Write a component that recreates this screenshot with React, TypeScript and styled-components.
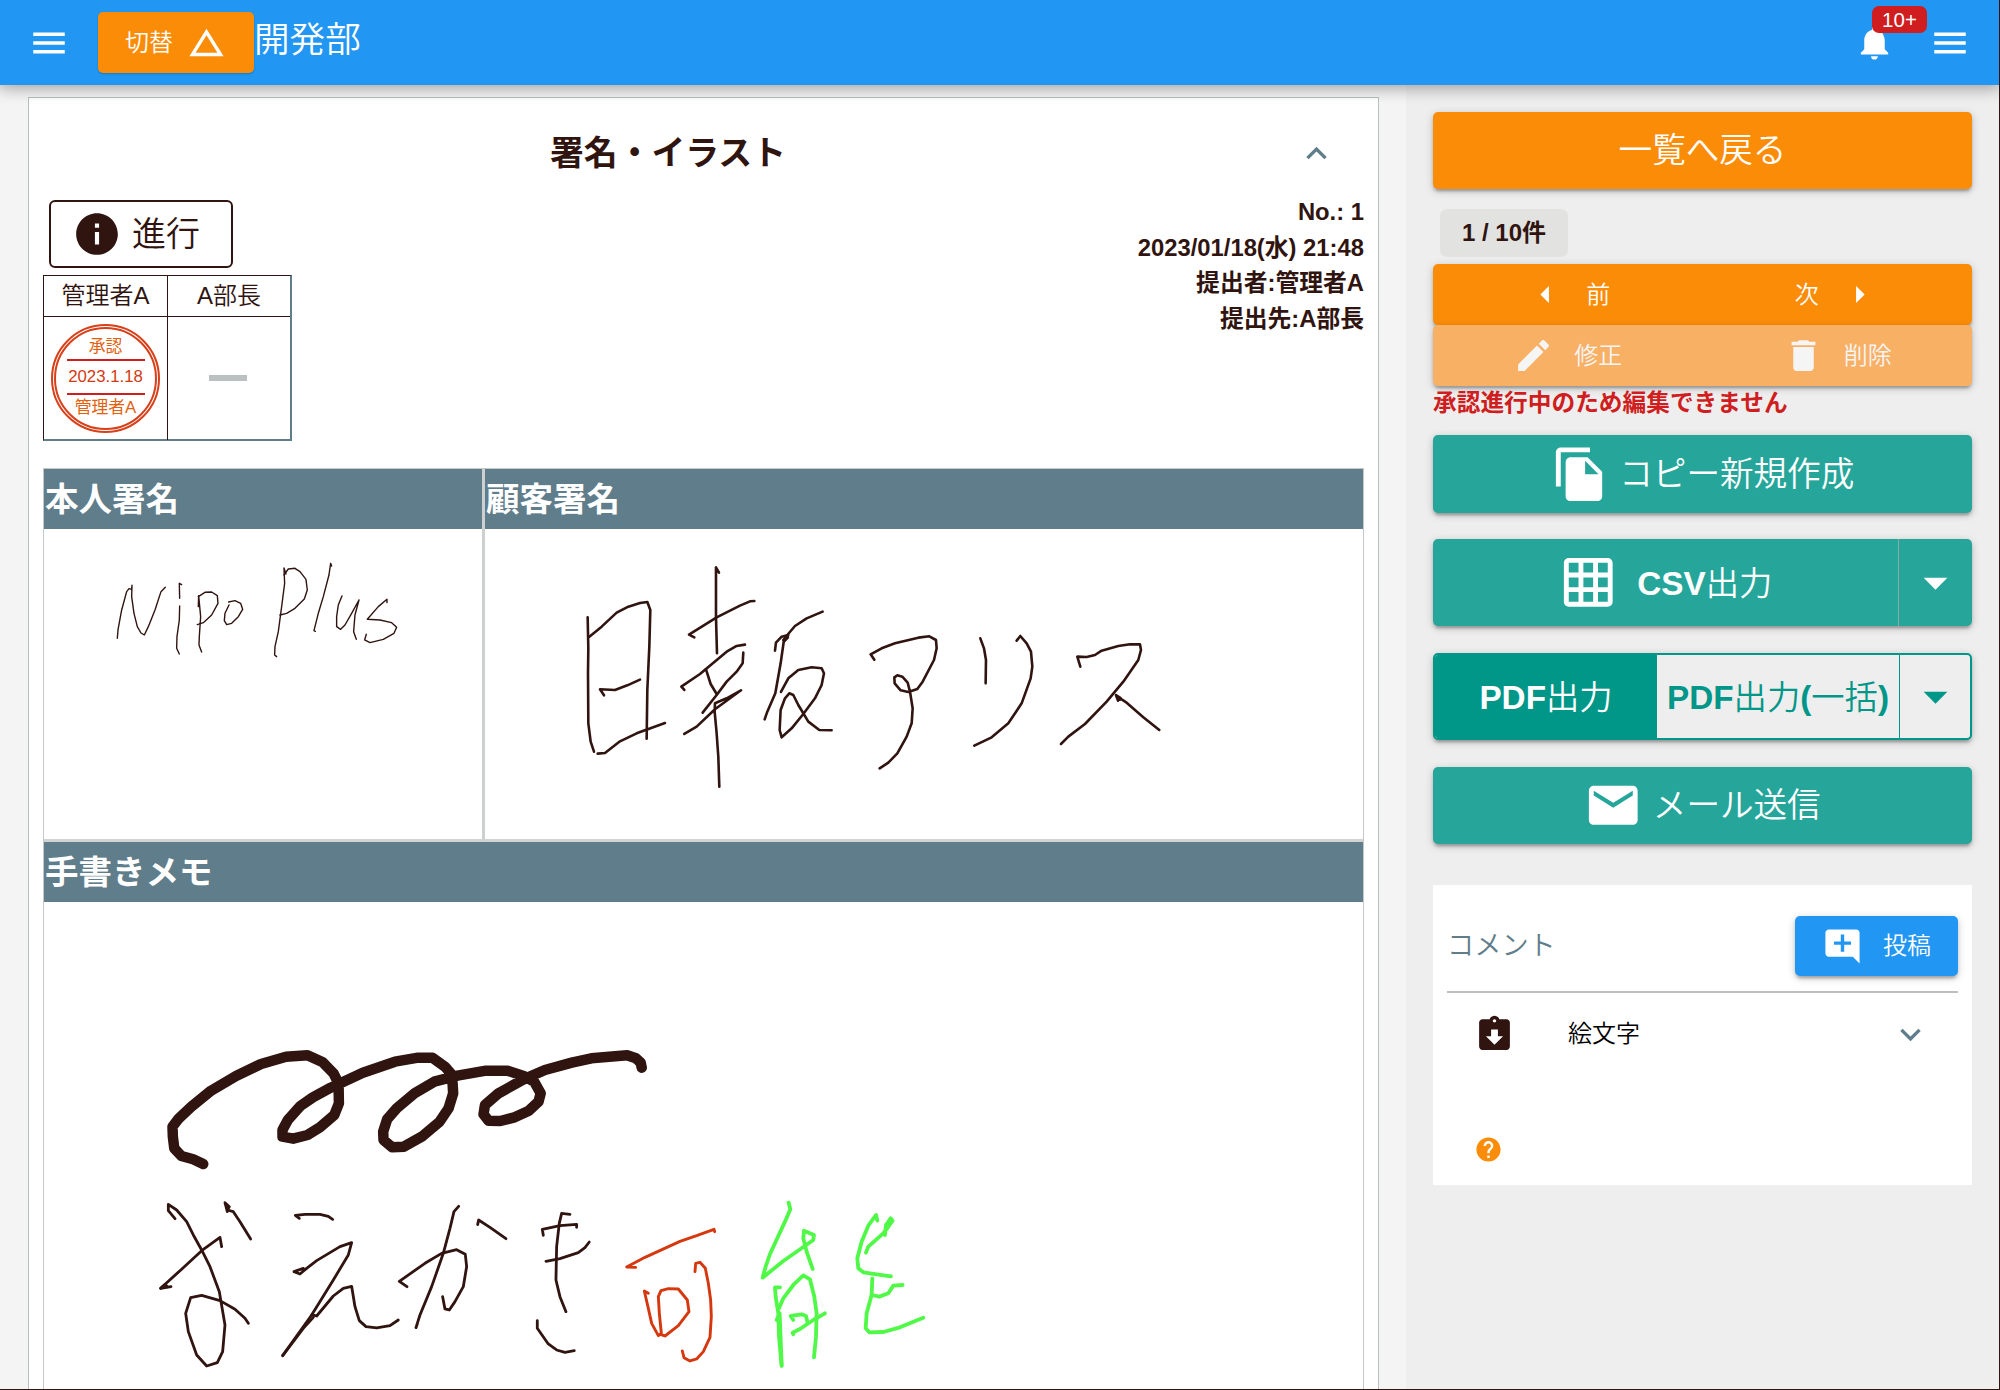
import React from "react";
import styled, { createGlobalStyle, css } from "styled-components";
import {
  MdMenu,
  MdChangeHistory,
  MdNotifications,
  MdExpandLess,
  MdExpandMore,
  MdInfo,
  MdArrowLeft,
  MdArrowRight,
  MdEdit,
  MdDelete,
  MdFileCopy,
  MdGridOn,
  MdArrowDropDown,
  MdEmail,
  MdAddComment,
  MdAssignmentReturned,
  MdHelp,
} from "react-icons/md";

const ink = "#301410";
const slate = "#607d8b";
const orange = "#fb8c08";
const teal = "#26a69a";
const deepTeal = "#009688";
const blue = "#2196f3";
const red = "#cf1d20";

const raised = css`
  box-shadow: 0 2px 8px rgba(0, 0, 0, 0.2), 0 3px 3px rgba(0, 0, 0, 0.14),
    0 5px 2px -3px rgba(0, 0, 0, 0.12);
`;

const GlobalStyle = createGlobalStyle`
  *, *::before, *::after { box-sizing: border-box; }
  body { margin: 0; }
  button { font: inherit; color: inherit; border: 0; margin: 0; padding: 0; background: none; }
  svg { display: block; flex: none; }
`;

const Page = styled.div`
  width: 2000px;
  height: 1390px;
  overflow: hidden;
  display: flex;
  flex-direction: column;
  background: #f4f4f4;
  border-right: 1px solid ${ink};
  border-bottom: 1px solid ${ink};
  color: ${ink};
  font-family: "Liberation Sans", "Noto Sans CJK JP", sans-serif;
  font-size: 24px;
  font-weight: 350;
  line-height: 1.5;
`;

const Header = styled.header`
  position: relative;
  z-index: 2;
  flex: none;
  height: 85px;
  display: flex;
  align-items: center;
  padding: 0 28px 0 28px;
  background: ${blue};
  color: #fff;
  box-shadow: 0 0 16px 3px rgba(0, 0, 0, 0.2), 0 0 16px rgba(0, 0, 0, 0.24);
`;

const SwitchButton = styled.button`
  width: 156px;
  height: 61px;
  margin-left: 28px;
  display: flex;
  align-items: center;
  justify-content: center;
  gap: 13px;
  border-radius: 5px;
  background: ${orange};
  box-shadow: 0 1px 2px rgba(0, 0, 0, 0.2);
`;

const Department = styled.h1`
  margin: 0 auto 6px 0;
  font-size: 35.6px;
  font-weight: 350;
  line-height: 48px;
`;

const Bell = styled.div`
  position: relative;
  margin-right: 34px;
`;

const Badge = styled.span`
  position: absolute;
  left: 18px;
  top: -16px;
  width: 55px;
  height: 27px;
  border-radius: 7px;
  background: ${red};
  font-size: 20.5px;
  line-height: 28px;
  text-align: center;
`;

const Columns = styled.div`
  flex: 1;
  min-height: 0;
  display: flex;
`;

const Main = styled.main`
  width: 1406px;
  padding: 12px 27px 0 28px;
  overflow: hidden;
`;

const Sheet = styled.article`
  height: 1300px;
  padding: 14px 14px 0 14px;
  background: #fff;
  border: 1px solid #b9bebe;
`;

const SheetHead = styled.div`
  height: 81px;
  display: flex;
  align-items: center;
  padding: 1px 27px 0 0;
  gap: 3px;
  color: ${slate};
`;

const SheetTitle = styled.h2`
  flex: 1;
  margin: 0;
  text-align: center;
  font-size: 33.8px;
  font-weight: 700;
  line-height: 48px;
  color: ${ink};
`;

const Summary = styled.div`
  height: 275px;
  display: flex;
  justify-content: space-between;
  align-items: flex-start;
`;

const StatusButton = styled.button`
  margin: 7px 0 7px 6px;
  width: 184px;
  height: 68px;
  display: flex;
  align-items: center;
  gap: 10px;
  padding: 0 0 1px 21px;
  border: 2px solid ${ink};
  border-radius: 6px;
  font-size: 34px;
`;

const Approvals = styled.div`
  width: 249px;
  height: 166px;
  display: grid;
  grid-template-columns: 124px 122px;
  grid-template-rows: 41px 123px;
  border: 1px solid ${ink};
  border-right: 2px solid ${slate};
  border-bottom: 2px solid ${slate};
`;

const ApprovalCell = styled.div<{ $head?: boolean; $last?: boolean }>`
  display: flex;
  align-items: center;
  justify-content: center;
  border-right: ${(p) => (p.$last ? "0" : `1px solid ${ink}`)};
  border-bottom: ${(p) => (p.$head ? `1px solid ${ink}` : "0")};
  line-height: 36px;
`;

const Stamp = styled.div`
  width: 109px;
  height: 109px;
  margin-bottom: 1px;
  border: 5px double #d8401a;
  border-radius: 50%;
  display: flex;
  flex-direction: column;
  align-items: center;
  padding-top: 5px;
  font-size: 16.8px;
  font-weight: 400;
  color: #e2600e;
`;

const StampLine = styled.span`
  line-height: 25px;
  white-space: nowrap;
`;

const StampDate = styled.span`
  width: 78px;
  height: 36px;
  border-top: 2px solid ${red};
  border-bottom: 2px solid ${red};
  color: #d23a14;
  line-height: 32px;
  text-align: center;
`;

const Pending = styled.div`
  width: 38px;
  height: 6px;
  margin: 0 2px 2px 0;
  background: #bac1c0;
`;

const Meta = styled.div`
  padding-top: 1px;
  font-size: 23.8px;
  font-weight: 700;
  line-height: 35.6px;
  text-align: right;
`;

const Fields = styled.div`
  border: 1px solid #c4c8c8;
  display: grid;
  grid-template-columns: 441px 1fr;
`;

const Field = styled.section<{ $wide?: boolean; $divided?: boolean }>`
  grid-column: ${(p) => (p.$wide ? "1 / -1" : "auto")};
  border-right: ${(p) => (p.$divided ? "3px solid #ced0d0" : "0")};
  border-bottom: 3px solid #d2d3d3;
`;

const FieldLabel = styled.h3`
  margin: 0;
  height: 60px;
  padding: 1px 0 0 1px;
  background: ${slate};
  color: #fff;
  font-size: 33.5px;
  font-weight: 600;
  line-height: 60px;
`;

const Drawer = styled.aside`
  flex: 1;
  padding: 27px;
  background: #eee;
`;

const Action = styled.button<{ $tone?: string; $h: number; $gap?: number; $mt?: number }>`
  width: 100%;
  height: ${(p) => p.$h}px;
  margin-top: ${(p) => p.$mt ?? 0}px;
  display: flex;
  align-items: center;
  justify-content: center;
  gap: ${(p) => p.$gap ?? 10}px;
  border-radius: 5px;
  background: ${(p) => p.$tone ?? teal};
  color: #fff;
  font-size: 33.6px;
  ${raised}
`;

const ActionText = styled.span`
  padding-top: 2px;
`;

const Chip = styled.div`
  width: 128px;
  height: 48px;
  margin: 20px 0 7px 7px;
  border-radius: 7px;
  background: #e2e2e0;
  text-align: center;
  font-weight: 600;
  line-height: 48px;
`;

const ButtonPair = styled.div<{ $disabled?: boolean }>`
  height: 61px;
  display: grid;
  grid-template-columns: 1fr 1fr;
  border-radius: 5px;
  background: ${(p) => (p.$disabled ? "#f8b064" : orange)};
  color: ${(p) => (p.$disabled ? "#f5f5f5" : "#fff")};
  ${raised}
`;

const PairButton = styled.button`
  display: flex;
  align-items: center;
  justify-content: center;
  gap: 20px;
`;

const Warning = styled.p`
  margin: 0;
  height: 34px;
  line-height: 34px;
  color: ${red};
  font-size: 23.7px;
  font-weight: 600;
  white-space: nowrap;
`;

const SplitButton = styled.div<{ $outlined?: boolean }>`
  height: 87px;
  margin-top: ${(p) => (p.$outlined ? 27 : 26)}px;
  display: flex;
  border-radius: 5px;
  overflow: hidden;
  background: ${(p) => (p.$outlined ? "#eee" : teal)};
  border: ${(p) => (p.$outlined ? `2px solid ${deepTeal}` : "0")};
  color: ${(p) => (p.$outlined ? deepTeal : "#fff")};
  font-size: 33.3px;
  ${raised}
`;

const Segment = styled.button<{ $w?: number; $solid?: boolean; $line?: string }>`
  flex: ${(p) => (p.$w ? "none" : "1")};
  width: ${(p) => (p.$w ? `${p.$w}px` : "auto")};
  display: flex;
  align-items: center;
  justify-content: center;
  gap: 20px;
  white-space: nowrap;
  border-left: ${(p) => (p.$line ? `1px solid ${p.$line}` : "0")};
  background: ${(p) => (p.$solid ? deepTeal : "transparent")};
  color: ${(p) => (p.$solid ? "#fff" : "inherit")};

  b {
    font-weight: 700;
  }
`;

const Comments = styled.section`
  margin-top: 41px;
  height: 300px;
  padding: 31px 14px 0;
  background: #fff;
`;

const CommentsHead = styled.div`
  height: 77px;
  display: flex;
  align-items: flex-start;
  justify-content: space-between;
  border-bottom: 2px solid #bdbfbf;
  color: ${slate};
  font-size: 27.2px;
  line-height: 60px;
`;

const PostButton = styled.button`
  width: 163px;
  height: 60px;
  display: flex;
  align-items: center;
  justify-content: center;
  gap: 20px;
  border-radius: 5px;
  background: ${blue};
  color: #fff;
  font-size: 24px;
  ${raised}
`;

const AttachmentRow = styled.div`
  height: 82px;
  display: flex;
  align-items: center;
  padding: 0 27px;

  svg:last-child {
    margin-left: auto;
    color: ${slate};
  }
`;

const AttachmentName = styled.span`
  margin-left: 53px;
  color: #000;
`;

const HelpRow = styled.div`
  padding: 60px 0 0 27px;
  color: ${orange};
`;

type StrokesProps = { at: string; width: number; color?: string; lines: string[] };

const Strokes = ({ at, width, color = ink, lines }: StrokesProps) => (
  <g
    transform={at}
    fill="none"
    stroke={color}
    strokeWidth={width}
    strokeLinecap="round"
    strokeLinejoin="round"
  >
    {lines.map((points) => (
      <polyline key={points} points={points} vectorEffect="non-scaling-stroke" />
    ))}
  </g>
);

const nipoPlus = [
  "262,565 264,540 275,480 290,425 297,416 305,418 306,406 305,440 312,490 322,530 333,549 343,555 355,530 375,480 393,425 406,412",
  "455,404 448,400 449,445",
  "449,468 448,510 441,560 440,595 448,612",
  "505,470 506,437 512,500 508,560 507,585 515,606",
  "505,440 525,427 545,426 562,437 564,460 545,495 520,518 502,524",
  "597,465 585,490 583,512 590,524 605,520 625,500 638,478 632,460 615,452 596,456",
  "768,372 762,354 764,400 755,470 745,545 735,590 734,615 740,620",
  "762,375 775,357 795,355 810,365 828,388 832,420 823,447 795,475 770,490 750,495",
  "905,348 902,340 897,375 880,440 865,490 852,542 856,544",
  "936,438 925,465 920,500 920,530 932,538 945,525 965,490 987,450 975,495 971,545 979,568",
  "1071,458 1071,448 1045,470 1012,508 1050,510 1085,518 1100,532 1092,550 1060,568 1020,578 1004,570 1009,553",
];

const nippo = [
  "143,232 145,325 144,400 145,550 152,605 162,635",
  "148,290 185,260 230,218 265,200 300,189 322,186 331,210 328,320 322,450 320,596",
  "192,466 180,448 225,450 262,436 300,419",
  "173,641 195,639 240,604 290,580 375,549",
  "537,98 528,82 528,230 531,340",
  "463,292 447,284 530,232 600,197 630,184 643,183",
  "433,450 424,440 480,402 560,335 590,318 615,314",
  "498,388 512,432 530,462",
  "610,338 608,370 590,395 560,425 530,465 488,518",
  "433,582 470,560 525,508 603,451 560,475 525,490 524,515 530,580 535,650 538,740",
  "848,215 800,235 765,258 742,285 730,300",
  "705,332 708,308 725,290 745,285 732,300 722,370 706,460 682,515 674,538",
  "736,290 744,292 734,303",
  "723,456 745,415 775,390 815,382 845,385 852,400 845,435 825,475 790,522 755,565 725,592 719,570 722,510 735,475 748,460 760,465 775,495 805,545 838,570 875,571",
];

const arisu = [
  "103,179 92,163 125,145 165,130 235,113 268,109 288,120 290,145 282,180 248,245 232,267 205,276 182,271 164,250 163,232 172,226 187,230 203,248 210,275 218,325 215,370 200,410 172,460 145,488 119,505",
  "421,115 432,145 438,180 437,250",
  "530,122 541,108 560,130 573,155 577,200 572,235 545,310 505,370 455,412 403,437",
  "721,200 712,170 740,171 765,165 785,152 835,138 870,133 900,133 903,150 895,180 850,245 800,305 735,372 685,410 663,432",
  "834,302 828,285 842,294 835,300 845,298 860,308 910,352 958,390",
];

const scribble = [
  "233,432 205,418 172,408 152,385 148,350 147,320 165,295 200,260 255,212 325,168 395,132 465,110 525,106 568,127 598,160 612,190 613,250 600,285 560,322 525,345 485,356 455,350 455,330 470,300 505,258 540,232 590,203 680,158 770,125 835,113 875,113 910,140 930,165 933,220 920,265 895,305 845,350 795,380 762,382 738,360 737,335 748,298 775,265 825,220 880,185 945,167 1025,152 1085,152 1130,168 1160,185 1178,220 1172,245 1145,272 1105,292 1065,303 1032,302 1018,283 1022,255 1060,220 1130,178 1190,150 1265,128 1320,115 1420,106 1445,115 1458,128 1461,143",
];

const oekaki = [
  "135,116 115,92 115,73 140,90 170,125 190,165 215,210 240,260 268,335 285,435 278,515 262,548 230,558 200,525 175,455 167,400 182,353 215,346 270,362 315,388 345,415 355,430",
  "275,200 270,172 215,212 150,272 92,325 123,320",
  "92,325 105,314 112,320",
  "292,95 285,68 298,80 292,90 310,95 330,125 362,177",
  "508,115 496,106 525,103 570,103 595,109 608,118",
  "520,265 492,275 510,282 530,265 560,242 630,200 665,188 655,225 610,300 545,405",
  "458,527 545,405 560,408 610,348 640,325 665,319 675,380 688,422 708,440 740,444 780,437 805,420",
  "458,527 520,445 550,412",
  "986,79 972,95 960,145 940,220 905,320 870,405 858,443 862,432",
  "831,320 808,304 885,250 935,220 980,209 1006,223 1010,260 1000,320 975,365 958,390 945,387 938,350",
  "1043,134 1046,120 1080,142 1128,176",
  "1240,166 1237,148 1290,137 1340,133 1340,142",
  "1320,103 1295,100 1288,130 1280,200 1278,300 1290,350 1308,395",
  "1248,244 1290,236 1345,218 1365,203 1378,186",
  "1222,422 1222,445 1255,492 1280,510 1305,517 1333,512",
];

const ka = [
  "107,262 80,261 135,232 240,184 290,167 342,148 344,155",
  "145,340 133,333 145,385 155,430 175,467 184,460 178,400 175,350 183,332 205,326 235,327 262,360 267,395 235,437 195,468 180,463",
  "285,275 287,250 300,247 316,265 325,310 332,360 334,410 330,472 310,515 290,537 270,543 252,533 247,513",
];

const nou = [
  "566,68 571,88 555,125 510,222 497,260 488,293 550,243 640,180 642,165 612,152 610,175 620,215 638,267",
  "540,322 525,322 527,350 535,400 537,470 545,558",
  "530,420 539,400 545,555",
  "537,385 550,355 580,315 610,286 630,298 643,350 650,400 648,470 642,532",
  "580,420 572,408 605,403 618,408 622,425",
  "580,463 578,458 600,447 640,420 675,400",
  "832,122 828,105 805,137 785,185 772,235 775,265 790,277 830,283 873,289",
  "855,165 858,135 872,115 878,122 850,160 805,200 798,218",
  "872,118 862,145",
  "817,295 815,345 800,400 797,445 808,457 850,456 900,442 970,413",
  "815,345 838,350 865,340 880,317 908,315",
];

export default function App() {
  return (
    <>
      <GlobalStyle />
      <Page>
        <Header>
          <MdMenu size={42} />
          <SwitchButton>
            切替
            <MdChangeHistory size={41} />
          </SwitchButton>
          <Department>開発部</Department>
          <Bell>
            <MdNotifications size={41} />
            <Badge>10+</Badge>
          </Bell>
          <MdMenu size={42} />
        </Header>
        <Columns>
          <Main>
            <Sheet>
              <SheetHead>
                <SheetTitle>署名・イラスト</SheetTitle>
                <MdExpandLess size={41} />
              </SheetHead>
              <Summary>
                <div>
                  <StatusButton>
                    <MdInfo size={50} />
                    <ActionText>進行</ActionText>
                  </StatusButton>
                  <Approvals>
                    <ApprovalCell $head>管理者A</ApprovalCell>
                    <ApprovalCell $head $last>
                      A部長
                    </ApprovalCell>
                    <ApprovalCell>
                      <Stamp>
                        <StampLine>承認</StampLine>
                        <StampDate>2023.1.18</StampDate>
                        <StampLine>管理者A</StampLine>
                      </Stamp>
                    </ApprovalCell>
                    <ApprovalCell $last>
                      <Pending />
                    </ApprovalCell>
                  </Approvals>
                </div>
                <Meta>
                  <div>No.: 1</div>
                  <div>2023/01/18(水) 21:48</div>
                  <div>提出者:管理者A</div>
                  <div>提出先:A部長</div>
                </Meta>
              </Summary>
              <Fields>
                <Field $divided>
                  <FieldLabel>本人署名</FieldLabel>
                  <svg width={438} height={310} viewBox="44 529 438 310">
                    <Strokes at="translate(30 450) scale(0.3333)" width={1.4} lines={nipoPlus} />
                  </svg>
                </Field>
                <Field>
                  <FieldLabel>顧客署名</FieldLabel>
                  <svg width={877} height={310} viewBox="485 529 877 310">
                    <Strokes at="translate(540 540) scale(0.3333)" width={2.6} lines={nippo} />
                    <Strokes at="translate(840 600) scale(0.3333)" width={2.6} lines={arisu} />
                  </svg>
                </Field>
                <Field $wide>
                  <FieldLabel>手書きメモ</FieldLabel>
                  <svg width={1318} height={495} viewBox="44 902 1318 495">
                    <Strokes at="translate(120 1020) scale(0.3571 0.3333)" width={10.5} lines={scribble} />
                    <Strokes at="translate(130 1180) scale(0.3333)" width={2.8} lines={oekaki} />
                    <Strokes at="translate(600 1180) scale(0.3333)" width={2.9} color="#d5380f" lines={ka} />
                    <Strokes at="translate(600 1180) scale(0.3333)" width={3.8} color="#50f848" lines={nou} />
                  </svg>
                </Field>
              </Fields>
            </Sheet>
          </Main>
          <Drawer>
            <Action $tone={orange} $h={77}>
              <ActionText>一覧へ戻る</ActionText>
            </Action>
            <Chip>1 / 10件</Chip>
            <ButtonPair>
              <PairButton>
                <MdArrowLeft size={41} />
                前
              </PairButton>
              <PairButton>
                次
                <MdArrowRight size={41} />
              </PairButton>
            </ButtonPair>
            <ButtonPair $disabled>
              <PairButton>
                <MdEdit size={41} />
                修正
              </PairButton>
              <PairButton>
                <MdDelete size={41} />
                削除
              </PairButton>
            </ButtonPair>
            <Warning>承認進行中のため編集できません</Warning>
            <Action $h={78.5} $mt={14.5}>
              <MdFileCopy size={58.5} />
              <ActionText>コピー新規作成</ActionText>
            </Action>
            <SplitButton>
              <Segment>
                <MdGridOn size={58.5} />
                <ActionText>
                  <b>CSV</b>出力
                </ActionText>
              </Segment>
              <Segment $w={74} $line="#8aa8a4">
                <MdArrowDropDown size={57} />
              </Segment>
            </SplitButton>
            <SplitButton $outlined>
              <Segment $w={222} $solid>
                <ActionText>
                  <b>PDF</b>出力
                </ActionText>
              </Segment>
              <Segment>
                <ActionText>
                  <b>PDF</b>出力<b>(</b>一括<b>)</b>
                </ActionText>
              </Segment>
              <Segment $w={71} $line={deepTeal}>
                <MdArrowDropDown size={57} />
              </Segment>
            </SplitButton>
            <Action $h={77} $mt={27}>
              <MdEmail size={58.5} />
              <ActionText>メール送信</ActionText>
            </Action>
            <Comments>
              <CommentsHead>
                コメント
                <PostButton>
                  <MdAddComment size={41} />
                  投稿
                </PostButton>
              </CommentsHead>
              <AttachmentRow>
                <MdAssignmentReturned size={41} />
                <AttachmentName>絵文字</AttachmentName>
                <MdExpandMore size={41} />
              </AttachmentRow>
              <HelpRow>
                <MdHelp size={29} />
              </HelpRow>
            </Comments>
          </Drawer>
        </Columns>
      </Page>
    </>
  );
}
